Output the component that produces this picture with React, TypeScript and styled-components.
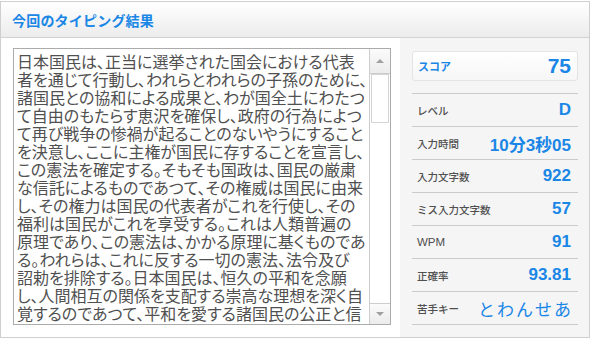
import React from "react";
import styled, { createGlobalStyle } from "styled-components";

const lines = [
  "日本国民は、正当に選挙された国会における代表",
  "者を通じて行動し、われらとわれらの子孫のために、",
  "諸国民との協和による成果と、わが国全土にわたつ",
  "て自由のもたらす恵沢を確保し、政府の行為によつ",
  "て再び戦争の惨禍が起ることのないやうにすること",
  "を決意し、ここに主権が国民に存することを宣言し、",
  "この憲法を確定する。そもそも国政は、国民の厳粛",
  "な信託によるものであつて、その権威は国民に由来",
  "し、その権力は国民の代表者がこれを行使し、その",
  "福利は国民がこれを享受する。これは人類普遍の",
  "原理であり、この憲法は、かかる原理に基くものであ",
  "る。われらは、これに反する一切の憲法、法令及び",
  "詔勅を排除する。日本国民は、恒久の平和を念願",
  "し、人間相互の関係を支配する崇高な理想を深く自",
  "覚するのであつて、平和を愛する諸国民の公正と信",
];

const stats = [
  { label: "レベル", value: "D" },
  { label: "入力時間", value: "10分3秒05" },
  { label: "入力文字数", value: "922" },
  { label: "ミス入力文字数", value: "57" },
  { label: "WPM", value: "91", latin: true },
  { label: "正確率", value: "93.81" },
];

const App = () => {
  return (
    <>
      <GlobalStyle />
      <Frame>
        <Header>今回のタイピング結果</Header>
        <Body>
          <LeftPane>
            <TextBox>
              <TextContent>
                {lines.map((l, i) => (
                  <TextLine key={i}>{l}</TextLine>
                ))}
              </TextContent>
              <ScrollBar>
                <ArrowButton $top>
                  <Arrow $up />
                </ArrowButton>
                <Thumb />
                <Track />
                <ArrowButton>
                  <Arrow />
                </ArrowButton>
              </ScrollBar>
            </TextBox>
          </LeftPane>
          <RightPane>
            <ScoreBox>
              <ScoreLabel>スコア</ScoreLabel>
              <ScoreValue>75</ScoreValue>
            </ScoreBox>
            <StatList>
              {stats.map((s) => (
                <StatRow key={s.label}>
                  <StatLabel $latin={s.latin}>{s.label}</StatLabel>
                  <StatValue>{s.value}</StatValue>
                </StatRow>
              ))}
              <StatRow>
                <StatLabel>苦手キー</StatLabel>
                <WeakKeys>とわんせあ</WeakKeys>
              </StatRow>
            </StatList>
          </RightPane>
        </Body>
      </Frame>
    </>
  );
};

export default App;

const GlobalStyle = createGlobalStyle`
  body {
    margin: 0;
    background: #fff;
    font-family: "Noto Sans CJK JP", "Liberation Sans", sans-serif;
  }
`;

const Frame = styled.div`
  margin-top: 1px;
  width: 590px;
  height: 337px;
  box-sizing: border-box;
  border: 1px solid #cfcfcf;
  display: flex;
  flex-direction: column;
`;

const Header = styled.div`
  height: 35px;
  flex-shrink: 0;
  border-bottom: 1px solid #d2d2d2;
  background: linear-gradient(#ffffff, #ececec);
  display: flex;
  align-items: center;
  padding-left: 11px;
  color: #1a86e6;
  font-size: 14px;
  font-weight: 700;
  letter-spacing: 0.2px;
`;

const Body = styled.div`
  flex: 1;
  display: flex;
  min-height: 0;
`;

const LeftPane = styled.div`
  width: 399px;
  flex-shrink: 0;
  background: #fff;
  padding: 10px 0 0 12px;
  box-sizing: border-box;
`;

const TextBox = styled.div`
  width: 378px;
  height: 277px;
  box-sizing: border-box;
  border: 1px solid #ababab;
  display: flex;
`;

const TextContent = styled.div`
  flex: 1;
  overflow: hidden;
  padding: 3px 0 0 3px;
  color: #505050;
  font-family: "Noto Sans CJK JP", sans-serif;
  font-feature-settings: "palt";
  font-size: 16px;
  line-height: 18px;
`;

const TextLine = styled.div`
  white-space: nowrap;
  height: 18px;
`;

const ScrollBar = styled.div`
  width: 20px;
  flex-shrink: 0;
  border-left: 1px solid #cdcdcd;
  display: flex;
  flex-direction: column;
  background: #fff;
`;

const ArrowButton = styled.div<{ $top?: boolean }>`
  height: ${({ $top }) => ($top ? "24px" : "20px")};
  flex-shrink: 0;
  display: flex;
  align-items: center;
  justify-content: center;
  background: linear-gradient(#fbfbfb, #ececec);
  border-${({ $top }) => ($top ? "bottom" : "top")}: 1px solid #cdcdcd;
`;

const Arrow = styled.div<{ $up?: boolean }>`
  width: 0;
  height: 0;
  border-left: 4px solid transparent;
  border-right: 4px solid transparent;
  ${({ $up }) =>
    $up ? "border-bottom: 4px solid #a0a0a0;" : "border-top: 4px solid #a0a0a0;"}
`;

const Thumb = styled.div`
  height: 49px;
  margin: 0 1px;
  box-sizing: border-box;
  border: 1px solid #d4d4d4;
  background: #fff;
`;

const Track = styled.div`
  flex: 1;
`;

const RightPane = styled.div`
  flex: 1;
  background: #f5f5f5;
  padding: 13px 11px 0 12px;
`;

const ScoreBox = styled.div`
  height: 30px;
  box-sizing: border-box;
  border: 1px solid #e4e4e4;
  border-radius: 3px;
  background: linear-gradient(#ffffff, #f6f6f6);
  display: flex;
  align-items: center;
  justify-content: space-between;
  padding: 0 6px 0 5px;
`;

const ScoreLabel = styled.span`
  color: #1a86e6;
  font-size: 11px;
  font-weight: 700;
`;

const ScoreValue = styled.span`
  color: #1a86e6;
  font-family: "Liberation Sans", Arial, sans-serif;
  font-size: 21px;
  font-weight: 700;
`;

const StatList = styled.div`
  margin-top: 12px;
  border-bottom: 1px solid #cbcbcb;
`;

const StatRow = styled.div`
  height: 33px;
  box-sizing: border-box;
  border-top: 1px solid #cbcbcb;
  display: flex;
  align-items: center;
  justify-content: space-between;
  padding: 0 7px 0 5px;
`;

const StatLabel = styled.span<{ $latin?: boolean }>`
  color: #505050;
  font-family: ${({ $latin }) =>
    $latin ? '"Liberation Sans", Arial, sans-serif' : '"Noto Sans CJK JP", sans-serif'};
  font-size: ${({ $latin }) => ($latin ? "11.5px" : "10.5px")};
  font-weight: 500;
`;

const StatValue = styled.span`
  color: #1a86e6;
  font-family: "Liberation Sans", "Noto Sans CJK JP", sans-serif;
  font-size: 17px;
  font-weight: 700;
`;

const WeakKeys = styled.span`
  color: #1a86e6;
  font-family: "Noto Sans CJK JP", sans-serif;
  font-size: 17px;
  letter-spacing: 2px;
  margin-right: -2px;
`;
